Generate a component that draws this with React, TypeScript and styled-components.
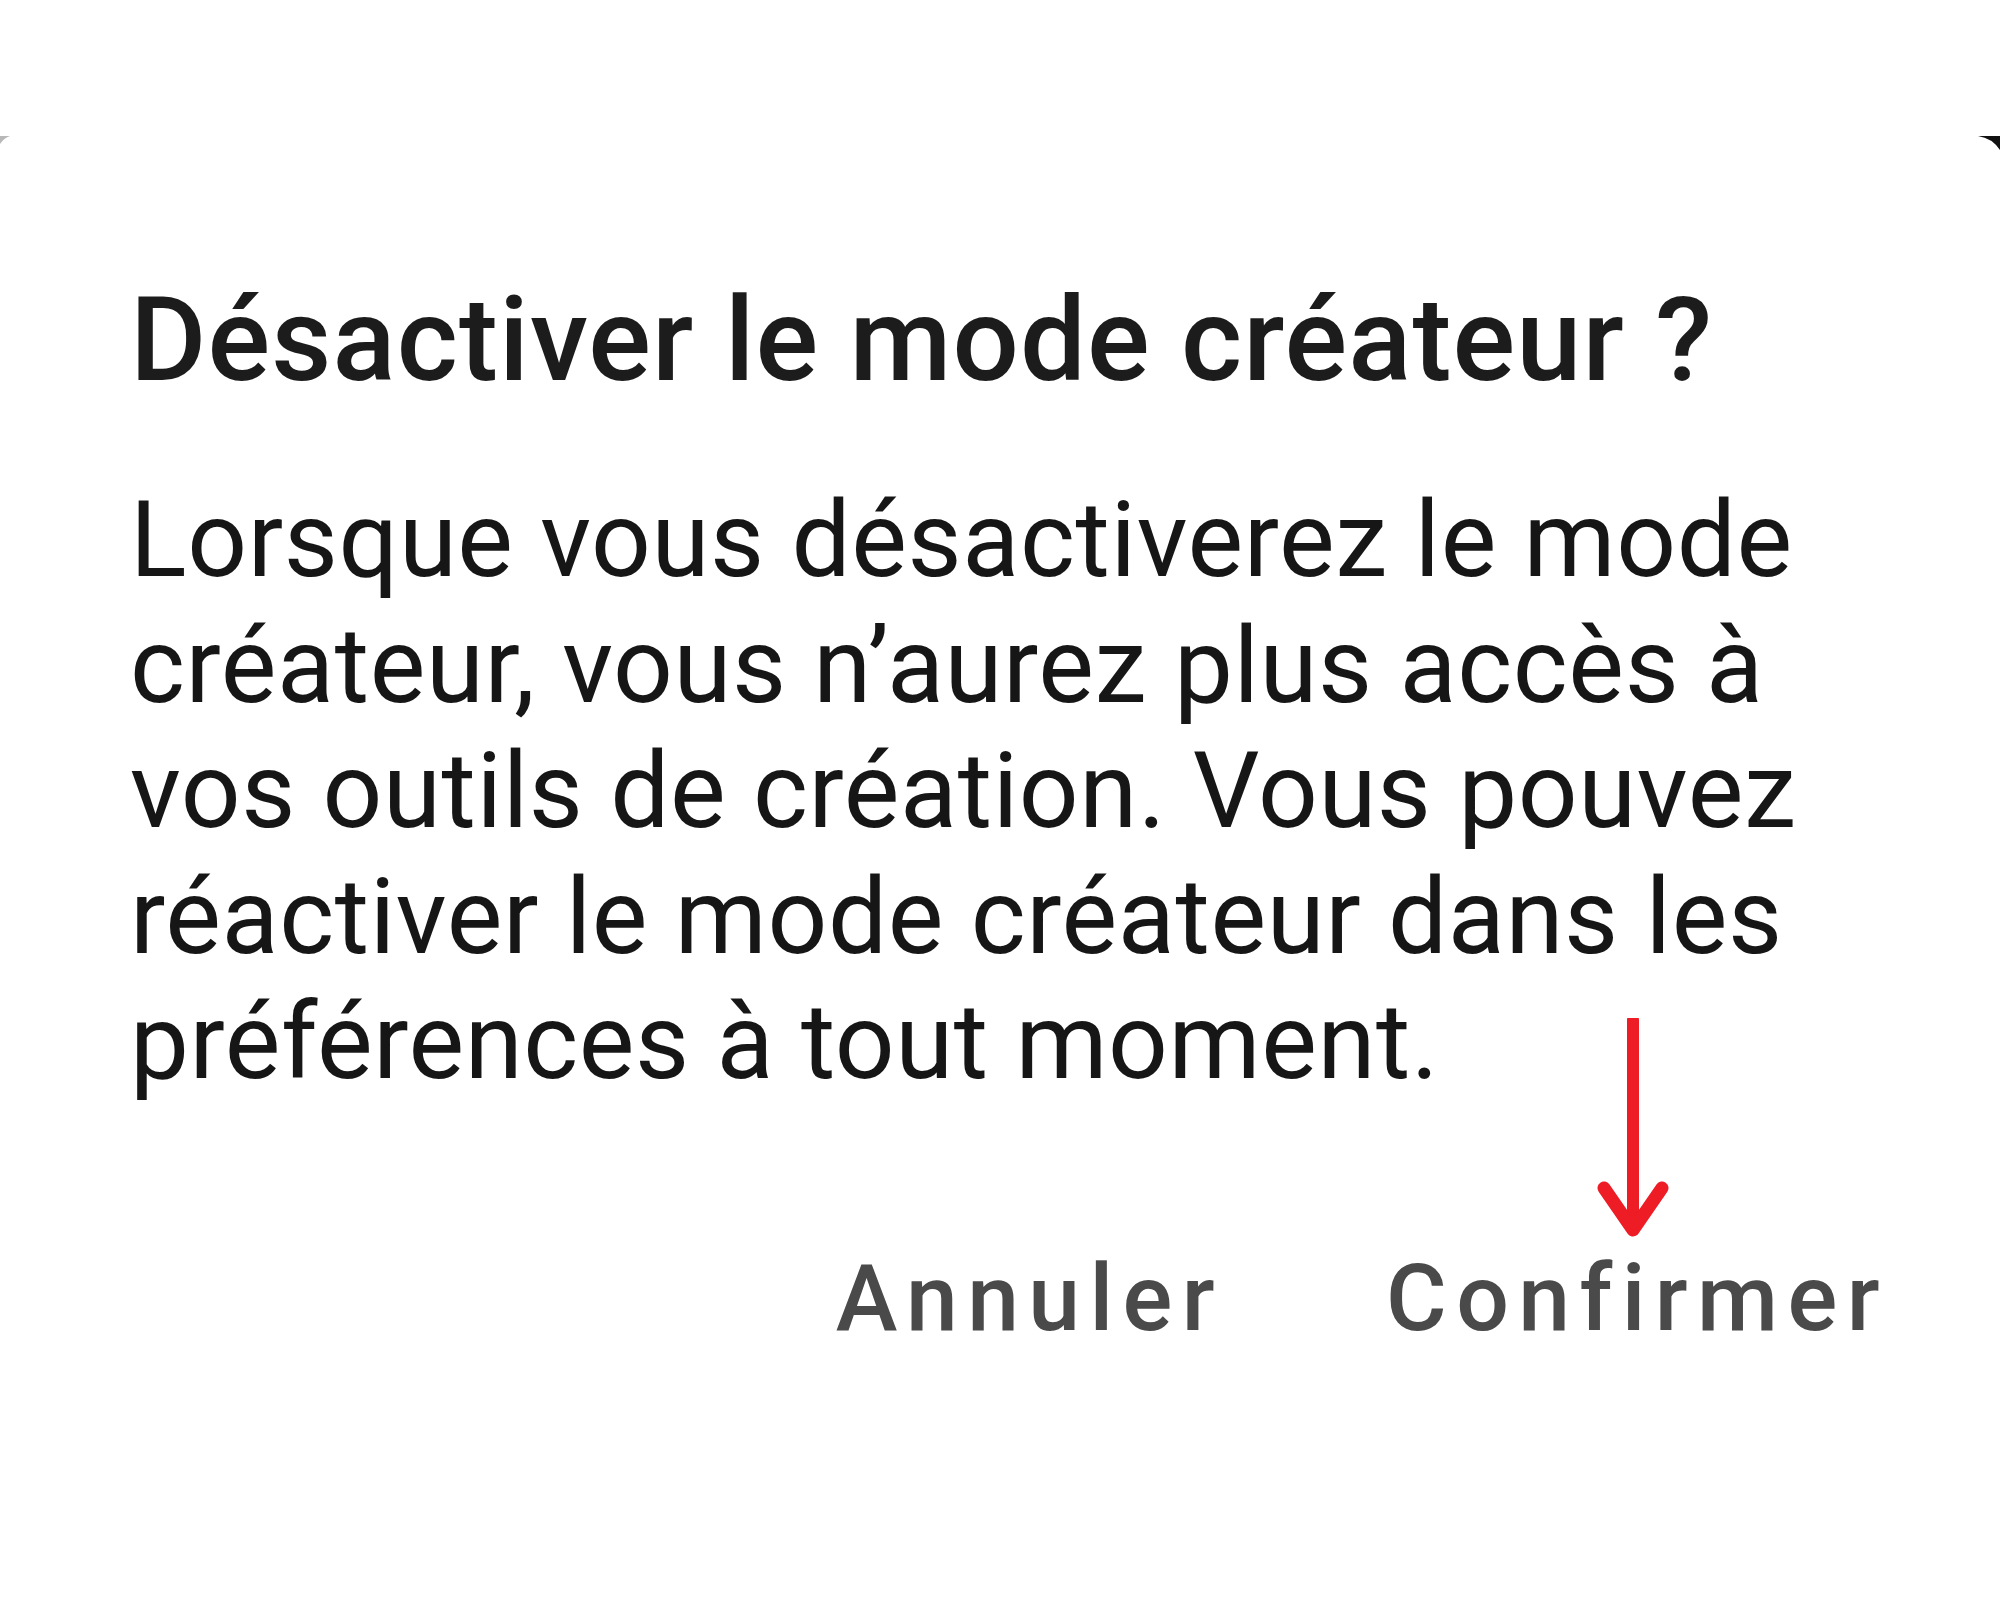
import React from 'react'
import styled, { createGlobalStyle } from 'styled-components'

const GlobalStyle = createGlobalStyle`
  html, body {
    margin: 0;
    padding: 0;
    background: #ffffff;
  }
  body {
    font-family: Roboto, "Noto Sans", "Liberation Sans", sans-serif;
  }
`

const Page = styled.div`
  position: relative;
  width: 2000px;
  height: 1600px;
  background: #ffffff;
  overflow: hidden;
`

const Sheet = styled.section`
  margin-top: 137px;
  padding: 133px 0 0 130px;
`

const Title = styled.h2`
  margin: 0;
  font-size: 117px;
  line-height: 140px;
  font-weight: 500;
  letter-spacing: 1.1px;
  color: #1c1c1c;
  white-space: nowrap;
`

const Body = styled.p`
  margin: 68px 0 0;
  font-size: 105px;
  line-height: 125.5px;
  font-weight: 400;
  letter-spacing: 0.6px;
  color: #161616;
`

const Line = styled.span`
  display: block;
  white-space: nowrap;
`

const Actions = styled.div`
  display: flex;
  justify-content: flex-end;
  gap: 162px;
  margin-top: 136px;
  padding-right: 111px;
`

const ActionButton = styled.button`
  border: none;
  background: none;
  padding: 0;
  font-family: inherit;
  font-size: 93px;
  line-height: 113px;
  font-weight: 500;
  letter-spacing: 9.4px;
  color: #4a4a4a;
  cursor: pointer;
`

const Corner = styled.svg<{ side: 'left' | 'right' }>`
  position: absolute;
  top: 132px;
  ${(p) => (p.side === 'left' ? 'left: 0;' : 'right: 0;')}
`

const Pointer = styled.svg`
  position: absolute;
  left: 1596px;
  top: 1018px;
`

const lines = [
  'Lorsque vous désactiverez le mode',
  'créateur, vous n’aurez plus accès à',
  'vos outils de création. Vous pouvez',
  'réactiver le mode créateur dans les',
  'préférences à tout moment.',
]

export default function App() {
  return (
    <Page>
      <GlobalStyle />
      <Corner side="left" width="18" height="16" viewBox="0 0 18 16">
        <path d="M0 4 L10 4 Q4 6 0 12 Z" fill="#9a9a9a" opacity="0.7" />
      </Corner>
      <Corner side="right" width="22" height="22" viewBox="0 0 22 22">
        <path d="M0 4 L22 4 L22 18 Q14 6 0 4 Z" fill="#111111" />
      </Corner>
      <Sheet>
        <Title>Désactiver le mode créateur ?</Title>
        <Body>
          {lines.map((l) => (
            <Line key={l}>{l}</Line>
          ))}
        </Body>
        <Actions>
          <ActionButton>Annuler</ActionButton>
          <ActionButton>Confirmer</ActionButton>
        </Actions>
      </Sheet>
      <Pointer width="74" height="224" viewBox="0 0 74 224">
        <line x1="37" y1="2" x2="37" y2="212" stroke="#ee1c24" strokeWidth="12" strokeLinecap="round" />
        <polyline
          points="8,170 37,212 66,170"
          fill="none"
          stroke="#ee1c24"
          strokeWidth="13"
          strokeLinecap="round"
          strokeLinejoin="round"
        />
      </Pointer>
    </Page>
  )
}
